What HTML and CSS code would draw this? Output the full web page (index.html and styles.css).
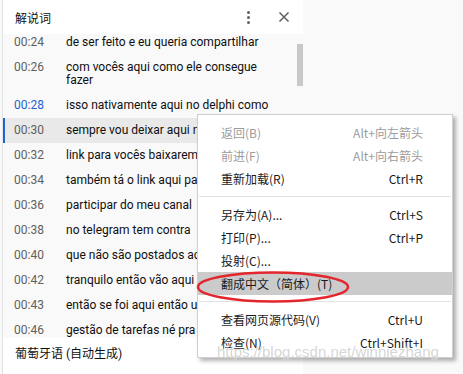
FILE: index.html
```html
<!DOCTYPE html>
<html lang="zh-CN">

<head>
    <meta charset="UTF-8">
    <title>解说词</title>
    <link rel="stylesheet" href="styles.css">
</head>

<body>
    <div class="panel">
        <header class="panel-header">
            <span class="panel-title">解说词</span>
            <span class="kebab"><i></i><i></i><i></i></span>
            <svg class="close" width="12" height="12" viewBox="0 0 12 12">
                <path d="M1.5 1.5 L10.5 10.5 M10.5 1.5 L1.5 10.5" stroke="#606060" stroke-width="1.5" fill="none" />
            </svg>
        </header>

        <div class="transcript">
            <div class="cue-list">
                <div class="cue"><span class="cue-time">00:24</span><span class="cue-text">de ser feito e eu queria compartilhar</span></div>
                <div class="cue"><span class="cue-time">00:26</span><span class="cue-text">com vocês aqui como ele consegue fazer</span></div>
                <div class="cue"><span class="cue-time is-link">00:28</span><span class="cue-text">isso nativamente aqui no delphi como</span></div>
                <div class="cue active"><span class="cue-time">00:30</span><span class="cue-text">sempre vou deixar aqui no</span></div>
                <div class="cue"><span class="cue-time">00:32</span><span class="cue-text">link para vocês baixarem</span></div>
                <div class="cue"><span class="cue-time">00:34</span><span class="cue-text">também tá o link aqui para</span></div>
                <div class="cue"><span class="cue-time">00:36</span><span class="cue-text">participar do meu canal</span></div>
                <div class="cue"><span class="cue-time">00:38</span><span class="cue-text">no telegram tem contra</span></div>
                <div class="cue"><span class="cue-time">00:40</span><span class="cue-text">que não são postados aqui</span></div>
                <div class="cue"><span class="cue-time">00:42</span><span class="cue-text">tranquilo então vão aqui</span></div>
                <div class="cue"><span class="cue-time">00:43</span><span class="cue-text">então se foi aqui então um</span></div>
                <div class="cue"><span class="cue-time">00:46</span><span class="cue-text">gestão de tarefas né pra</span></div>
            </div>
            <div class="scroll-track"><div class="scroll-thumb"></div></div>
        </div>

        <footer class="panel-footer">葡萄牙语 (自动生成)</footer>
    </div>

    <!-- browser context menu -->
    <div class="context-menu">
        <div class="menu-item disabled"><span>返回(B)</span><span>Alt+向左箭头</span></div>
        <div class="menu-item disabled"><span>前进(F)</span><span>Alt+向右箭头</span></div>
        <div class="menu-item"><span>重新加载(R)</span><span>Ctrl+R</span></div>
        <div class="menu-sep"></div>
        <div class="menu-item"><span>另存为(A)...</span><span>Ctrl+S</span></div>
        <div class="menu-item"><span>打印(P)...</span><span>Ctrl+P</span></div>
        <div class="menu-item"><span>投射(C)...</span></div>
        <div class="menu-item hover"><span>翻成中文（简体）(T)</span></div>
        <div class="menu-sep"></div>
        <div class="menu-item"><span>查看网页源代码(V)</span><span>Ctrl+U</span></div>
        <div class="menu-item"><span>检查(N)</span><span>Ctrl+Shift+I</span></div>
    </div>

    <!-- annotation -->
    <svg class="mark" width="160" height="36" viewBox="0 0 160 36">
        <ellipse cx="78" cy="17" rx="75" ry="14.5" fill="none" stroke="#e3262b" stroke-width="2.5" />
    </svg>

    <div class="watermark">https://blog.csdn.net/winniezhang</div>
</body>

</html>
```

FILE: styles.css
```css
body {
    margin: 0;
    background: #f9f9f9;
    font-family: Roboto, "Noto Sans CJK SC", sans-serif;
    color: #0f0f0f;
    overflow: hidden;
    height: 374px;
}

.panel {
    width: 300px;
    height: 374px;
    margin-left: 2px;
    border-left: 1px solid #e3e3e3;
    display: flex;
    flex-direction: column;
}

.panel-header {
    height: 34px;
    flex-shrink: 0;
    background: #fff;
    display: flex;
    align-items: center;
    padding: 0 12px;
}

.panel-title {
    flex: 1;
    font-size: 12px;
}

.kebab {
    display: flex;
    flex-direction: column;
    gap: 2px;
    margin-right: 28px;
}

.kebab i {
    width: 3px;
    height: 3px;
    border-radius: 50%;
    background: #606060;
}

.close {
    margin-right: 1px;
}

.transcript {
    height: 304px;
    flex-shrink: 0;
    overflow: hidden;
    display: flex;
}

.cue-list {
    flex: 1;
    margin-top: -4px;
}

.cue {
    display: flex;
    padding: 6px 20px 6px 11px;
    font-size: 12px;
    line-height: 13px;
}

.cue.active {
    background: #e9e9e9;
    border-left: 2px solid #1f63d3;
    padding-left: 9px;
}

.cue-time {
    width: 52px;
    flex-shrink: 0;
    color: #606060;
}

.cue-time.is-link {
    color: #1f63d3;
}

.cue-text {
    flex: 1;
}

.scroll-track {
    width: 6px;
}

.scroll-thumb {
    margin-top: 10px;
    height: 42px;
    background: #c8c8c8;
}

.panel-footer {
    flex: 1;
    background: #fff;
    padding: 10px 12px;
    font-size: 12px;
    line-height: 13px;
}

.context-menu {
    position: absolute;
    left: 197px;
    top: 114px;
    width: 254px;
    padding: 6px 0 3px;
    background: #fff;
    border: 1px solid #cfcfcf;
    box-shadow: 3px 3px 4px rgb(0 0 0 / 0.3);
    font-family: "Noto Sans CJK SC", sans-serif;
    font-size: 12px;
    color: #1a1a1a;
}

.menu-item {
    height: 23px;
    display: flex;
    align-items: center;
    justify-content: space-between;
    padding: 0 29px 0 23px;
}

.menu-item.disabled {
    color: #9c9c9c;
}

.menu-item.hover {
    background: #cbcbcb;
}

.menu-sep {
    height: 1px;
    margin: 6px 1px;
    background: #e2e2e2;
}

.mark {
    position: absolute;
    left: 195px;
    top: 270px;
}

.watermark {
    position: absolute;
    left: 217px;
    top: 343px;
    font-family: "Liberation Sans", sans-serif;
    font-size: 15px;
    color: rgb(160 160 160 / 0.45);
    text-shadow: 0 0 1px #fff;
    white-space: nowrap;
}
```
